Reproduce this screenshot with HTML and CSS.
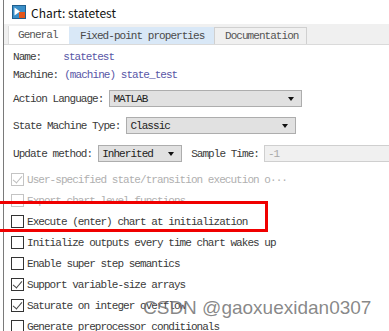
FILE: index.html
```html
<!DOCTYPE html>
<html>
<head>
<meta charset="utf-8">
<link rel="stylesheet" href="styles.css">
</head>
<body>
<div class="window">
  <div class="title">
    <svg class="ticon" width="14" height="14" viewBox="0 0 14 14">
      <rect x="0.5" y="0.5" width="13" height="13" fill="#3a8fc8" stroke="#1f5f8f"/>
      <path d="M2.5 2.5 L8 6.5 L2.5 10.5 Z" fill="#ffffff"/>
      <rect x="7" y="7" width="6" height="6" fill="#e2561b"/>
    </svg>
    <span>Chart: statetest</span>
  </div>
  <div class="tabs">
    <div class="tab active">General</div>
    <div class="tab hover">Fixed-point properties</div>
    <div class="tab plain">Documentation</div>
  </div>
  <div class="content">
    <div class="row r-name"><span class="lbl">Name:</span><span class="val name-val">statetest</span></div>
    <div class="row r-mach"><span class="lbl">Machine:</span><span class="val mach-val">(machine) state_test</span></div>
    <div class="row r-action"><span class="lbl">Action Language:</span>
      <div class="select sel-action"><span>MATLAB</span><i class="arrow"></i></div>
    </div>
    <div class="row r-sm"><span class="lbl">State Machine Type:</span>
      <div class="select sel-sm"><span>Classic</span><i class="arrow"></i></div>
    </div>
    <div class="row r-upd"><span class="lbl">Update method:</span>
      <div class="select sel-upd"><span>Inherited</span><i class="arrow"></i></div>
      <span class="lbl st">Sample Time:</span>
      <div class="input"><span>-1</span></div>
    </div>
    <div class="row chk disabled"><span class="box checked"></span><span>User-specified state/transition execution o&middot;&middot;&middot;</span></div>
    <div class="row chk disabled"><span class="box"></span><span>Export chart level functions</span></div>
    <div class="row chk"><span class="box"></span><span>Execute (enter) chart at initialization</span></div>
    <div class="row chk"><span class="box"></span><span>Initialize outputs every time chart wakes up</span></div>
    <div class="row chk"><span class="box"></span><span>Enable super step semantics</span></div>
    <div class="row chk"><span class="box checked"></span><span>Support variable-size arrays</span></div>
    <div class="row chk"><span class="box checked"></span><span>Saturate on integer overflow</span></div>
    <div class="row chk"><span class="box"></span><span>Generate preprocessor conditionals</span></div>
  </div>
  <div class="highlight"></div>
  <div class="watermark">CSDN @gaoxuexidan0307</div>
</div>
</body>
</html>
```
FILE: styles.css
```css
html, body {
  margin: 0;
  padding: 0;
  background: #ffffff;
  overflow: hidden;
}
.window {
  position: relative;
  width: 389px;
  height: 331px;
  overflow: hidden;
  background: #ffffff;
}
.window::before {
  content: "";
  position: absolute;
  left: 3px;
  top: 0;
  bottom: 0;
  width: 1px;
  background: #7a7a7a;
}
.title {
  height: 24px;
  display: flex;
  align-items: center;
  padding-left: 12px;
  font-family: "Noto Sans CJK SC", "Noto Sans", sans-serif;
  font-size: 12px;
  color: #111;
}
.ticon {
  margin-right: 5px;
  flex: none;
}
.tabs {
  height: 20px;
  margin-left: 4px;
  background: #f0f0f0;
  border-bottom: 1px solid #dadada;
  display: flex;
  align-items: flex-end;
  padding-left: 4px;
  font-family: "Liberation Mono", monospace;
  font-size: 11px;
  letter-spacing: -0.95px;
  color: #555;
}
.tab {
  height: 17px;
  display: flex;
  align-items: center;
  box-sizing: border-box;
  flex: none;
}
.tab.active {
  width: 61px;
  background: #ffffff;
  border-left: 1px solid #dcdcdc;
  padding-left: 9px;
  height: 18px;
}
.tab.hover {
  width: 145px;
  background: #d9e8f7;
  padding-left: 11px;
  color: #4a4a4a;
}
.tab.plain {
  width: 93px;
  border: 1px solid #d0d0d0;
  border-bottom: none;
  padding-left: 10px;
  color: #555;
}
.content {
  padding-top: 3px;
  padding-left: 13px;
  font-family: "Liberation Mono", monospace;
  font-size: 11px;
  letter-spacing: -0.95px;
  color: #3a3a3a;
}
.row {
  display: flex;
  align-items: center;
  white-space: nowrap;
}
.row > * {
  flex: none;
}
.r-name, .r-mach {
  height: 18px;
}
.name-val {
  margin-left: 22px;
  color: #5856a6;
}
.mach-val {
  margin-left: 6px;
  color: #5856a6;
}
.r-action {
  height: 21px;
  margin-top: 4px;
}
.r-sm {
  height: 21px;
  margin-top: 6px;
}
.r-upd {
  height: 21px;
  margin-top: 7px;
}
.select {
  position: relative;
  height: 17px;
  box-sizing: border-box;
  background: #e1e1e1;
  border: 1px solid #adadad;
  display: flex;
  align-items: center;
  padding-left: 3px;
  color: #222;
}
.sel-action {
  margin-left: 6px;
  width: 193px;
}
.sel-sm {
  margin-left: 6px;
  width: 170px;
}
.sel-upd {
  margin-left: 6px;
  width: 84px;
}
.arrow {
  position: absolute;
  right: 7px;
  top: 6px;
  width: 0;
  height: 0;
  border-left: 3.5px solid transparent;
  border-right: 3.5px solid transparent;
  border-top: 4px solid #111;
}
.st {
  margin-left: 9px;
}
.input {
  margin-left: 5px;
  height: 17px;
  width: 140px;
  box-sizing: border-box;
  border: 1px solid #cfcfcf;
  background: #f0f0f0;
  display: flex;
  align-items: center;
  padding-left: 3px;
  color: #a8a8a8;
}
.chk {
  height: 21px;
  margin-left: -2px;
}
.r-upd + .chk {
  margin-top: 5px;
}
.box {
  position: relative;
  width: 13px;
  height: 13px;
  box-sizing: border-box;
  border: 1px solid #333;
  background: #fff;
  margin-right: 3px;
}
.box.checked::after {
  content: "";
  position: absolute;
  left: 3px;
  top: 0px;
  width: 4px;
  height: 8px;
  border-right: 1.5px solid #444;
  border-bottom: 1.5px solid #444;
  transform: rotate(40deg);
}
.chk.disabled {
  color: #b0b0b0;
}
.chk.disabled .box {
  border-color: #c4c4c4;
}
.chk.disabled .box.checked::after {
  border-color: #bdbdbd;
}
.highlight {
  position: absolute;
  left: -6px;
  top: 201px;
  width: 274px;
  height: 31px;
  box-sizing: border-box;
  border: 3px solid #f00000;
}
.watermark {
  position: absolute;
  left: 143px;
  top: 297px;
  font-family: "Liberation Sans", "Noto Sans", sans-serif;
  font-size: 19px;
  color: rgba(115, 115, 115, 0.85);
  white-space: nowrap;
}
```
